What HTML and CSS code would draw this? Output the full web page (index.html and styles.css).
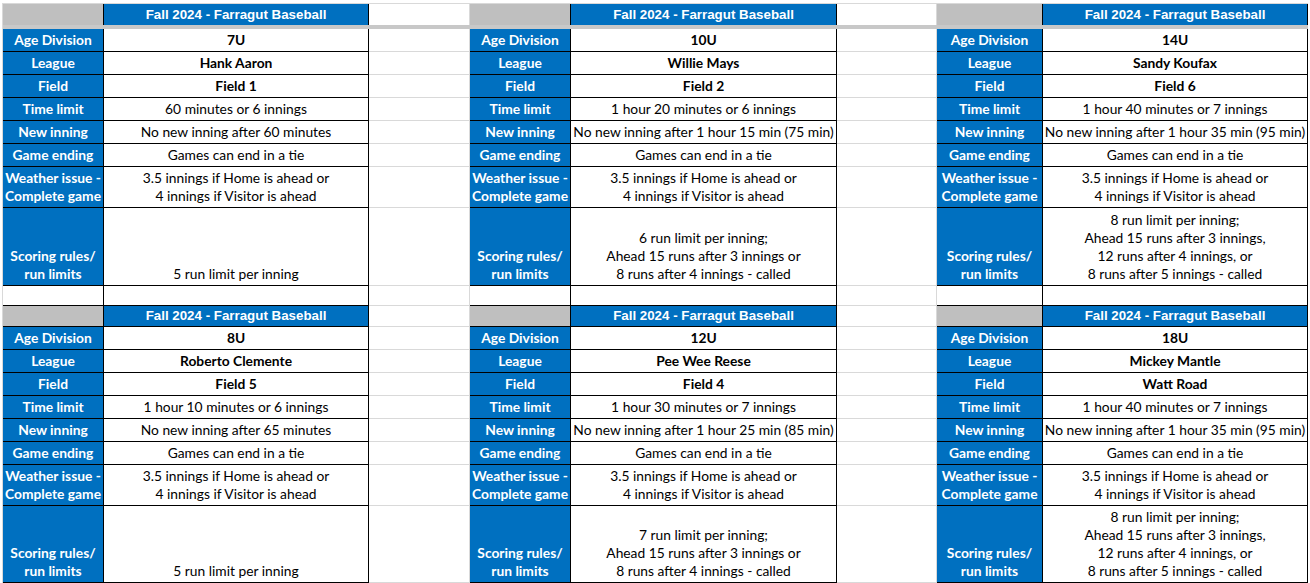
FILE: index.html
```html
<!DOCTYPE html>
<html lang="en">
<head>
<meta charset="utf-8">
<title>Fall 2024 - Farragut Baseball</title>
<link rel="stylesheet" href="styles.css">
</head>
<body>
<div class="sheet">
  <div class="row r-title">
    <div class="c hgray"></div><div class="c htitle">Fall 2024 - Farragut Baseball</div><div class="c gap"></div>
    <div class="c hgray"></div><div class="c htitle">Fall 2024 - Farragut Baseball</div><div class="c gap"></div>
    <div class="c hgray"></div><div class="c htitle">Fall 2024 - Farragut Baseball</div>
  </div>
  <div class="band"></div>
  <div class="row r-std">
    <div class="c lbl">Age Division</div><div class="c val b">7U</div><div class="c gap"></div>
    <div class="c lbl">Age Division</div><div class="c val b">10U</div><div class="c gap"></div>
    <div class="c lbl">Age Division</div><div class="c val b">14U</div>
  </div>
  <div class="row r-std">
    <div class="c lbl">League</div><div class="c val b">Hank Aaron</div><div class="c gap"></div>
    <div class="c lbl">League</div><div class="c val b">Willie Mays</div><div class="c gap"></div>
    <div class="c lbl">League</div><div class="c val b">Sandy Koufax</div>
  </div>
  <div class="row r-std">
    <div class="c lbl">Field</div><div class="c val b">Field 1</div><div class="c gap"></div>
    <div class="c lbl">Field</div><div class="c val b">Field 2</div><div class="c gap"></div>
    <div class="c lbl">Field</div><div class="c val b">Field 6</div>
  </div>
  <div class="row r-std">
    <div class="c lbl">Time limit</div><div class="c val">60 minutes or 6 innings</div><div class="c gap"></div>
    <div class="c lbl">Time limit</div><div class="c val">1 hour 20 minutes or 6 innings</div><div class="c gap"></div>
    <div class="c lbl">Time limit</div><div class="c val">1 hour 40 minutes or 7 innings</div>
  </div>
  <div class="row r-std">
    <div class="c lbl">New inning</div><div class="c val">No new inning after 60 minutes</div><div class="c gap"></div>
    <div class="c lbl">New inning</div><div class="c val">No new inning after 1 hour 15 min (75 min)</div><div class="c gap"></div>
    <div class="c lbl">New inning</div><div class="c val">No new inning after 1 hour 35 min (95 min)</div>
  </div>
  <div class="row r-std">
    <div class="c lbl">Game ending</div><div class="c val">Games can end in a tie</div><div class="c gap"></div>
    <div class="c lbl">Game ending</div><div class="c val">Games can end in a tie</div><div class="c gap"></div>
    <div class="c lbl">Game ending</div><div class="c val">Games can end in a tie</div>
  </div>
  <div class="row r-weather">
    <div class="c lbl"><span>Weather issue -<br>Complete game</span></div><div class="c val"><span>3.5 innings if Home is ahead or<br>4 innings if Visitor is ahead</span></div><div class="c gap"></div>
    <div class="c lbl"><span>Weather issue -<br>Complete game</span></div><div class="c val"><span>3.5 innings if Home is ahead or<br>4 innings if Visitor is ahead</span></div><div class="c gap"></div>
    <div class="c lbl"><span>Weather issue -<br>Complete game</span></div><div class="c val"><span>3.5 innings if Home is ahead or<br>4 innings if Visitor is ahead</span></div>
  </div>
  <div class="row r-score1">
    <div class="c lbl"><span>Scoring rules/<br>run limits</span></div><div class="c val">5 run limit per inning</div><div class="c gap"></div>
    <div class="c lbl"><span>Scoring rules/<br>run limits</span></div><div class="c val"><span>6 run limit per inning;<br>Ahead 15 runs after 3 innings or<br>8 runs after 4 innings - called</span></div><div class="c gap"></div>
    <div class="c lbl"><span>Scoring rules/<br>run limits</span></div><div class="c val"><span>8 run limit per inning;<br>Ahead 15 runs after 3 innings,<br>12 runs after 4 innings, or<br>8 runs after 5 innings - called</span></div>
  </div>
  <div class="row r-blank">
    <div class="c val"></div><div class="c val"></div><div class="c gap"></div>
    <div class="c val"></div><div class="c val"></div><div class="c gap"></div>
    <div class="c val"></div><div class="c val"></div>
  </div>
  <div class="row r-title2">
    <div class="c hgray"></div><div class="c htitle">Fall 2024 - Farragut Baseball</div><div class="c gap"></div>
    <div class="c hgray"></div><div class="c htitle">Fall 2024 - Farragut Baseball</div><div class="c gap"></div>
    <div class="c hgray"></div><div class="c htitle">Fall 2024 - Farragut Baseball</div>
  </div>
  <div class="row r-std">
    <div class="c lbl">Age Division</div><div class="c val b">8U</div><div class="c gap"></div>
    <div class="c lbl">Age Division</div><div class="c val b">12U</div><div class="c gap"></div>
    <div class="c lbl">Age Division</div><div class="c val b">18U</div>
  </div>
  <div class="row r-std">
    <div class="c lbl">League</div><div class="c val b">Roberto Clemente</div><div class="c gap"></div>
    <div class="c lbl">League</div><div class="c val b">Pee Wee Reese</div><div class="c gap"></div>
    <div class="c lbl">League</div><div class="c val b">Mickey Mantle</div>
  </div>
  <div class="row r-std">
    <div class="c lbl">Field</div><div class="c val b">Field 5</div><div class="c gap"></div>
    <div class="c lbl">Field</div><div class="c val b">Field 4</div><div class="c gap"></div>
    <div class="c lbl">Field</div><div class="c val b">Watt Road</div>
  </div>
  <div class="row r-std">
    <div class="c lbl">Time limit</div><div class="c val">1 hour 10 minutes or 6 innings</div><div class="c gap"></div>
    <div class="c lbl">Time limit</div><div class="c val">1 hour 30 minutes or 7 innings</div><div class="c gap"></div>
    <div class="c lbl">Time limit</div><div class="c val">1 hour 40 minutes or 7 innings</div>
  </div>
  <div class="row r-std">
    <div class="c lbl">New inning</div><div class="c val">No new inning after 65 minutes</div><div class="c gap"></div>
    <div class="c lbl">New inning</div><div class="c val">No new inning after 1 hour 25 min (85 min)</div><div class="c gap"></div>
    <div class="c lbl">New inning</div><div class="c val">No new inning after 1 hour 35 min (95 min)</div>
  </div>
  <div class="row r-std">
    <div class="c lbl">Game ending</div><div class="c val">Games can end in a tie</div><div class="c gap"></div>
    <div class="c lbl">Game ending</div><div class="c val">Games can end in a tie</div><div class="c gap"></div>
    <div class="c lbl">Game ending</div><div class="c val">Games can end in a tie</div>
  </div>
  <div class="row r-weather">
    <div class="c lbl"><span>Weather issue -<br>Complete game</span></div><div class="c val"><span>3.5 innings if Home is ahead or<br>4 innings if Visitor is ahead</span></div><div class="c gap"></div>
    <div class="c lbl"><span>Weather issue -<br>Complete game</span></div><div class="c val"><span>3.5 innings if Home is ahead or<br>4 innings if Visitor is ahead</span></div><div class="c gap"></div>
    <div class="c lbl"><span>Weather issue -<br>Complete game</span></div><div class="c val"><span>3.5 innings if Home is ahead or<br>4 innings if Visitor is ahead</span></div>
  </div>
  <div class="row r-score2">
    <div class="c lbl"><span>Scoring rules/<br>run limits</span></div><div class="c val">5 run limit per inning</div><div class="c gap"></div>
    <div class="c lbl"><span>Scoring rules/<br>run limits</span></div><div class="c val"><span>7 run limit per inning;<br>Ahead 15 runs after 3 innings or<br>8 runs after 4 innings - called</span></div><div class="c gap"></div>
    <div class="c lbl"><span>Scoring rules/<br>run limits</span></div><div class="c val"><span>8 run limit per inning;<br>Ahead 15 runs after 3 innings,<br>12 runs after 4 innings, or<br>8 runs after 5 innings - called</span></div>
  </div>
</div>
</body>
</html>
```
FILE: styles.css
```css
* { box-sizing: border-box; }

body {
  margin: 0;
  background: #ffffff;
  font-family: Lato, "Liberation Sans", sans-serif;
  color: #000000;
}

.sheet {
  margin: 3px 0 0 2px;
  width: 1306px;
  border-top: 1px solid #d9d9d9;
  border-left: 1px solid #d9d9d9;
}

.row {
  display: grid;
  grid-template-columns: 101px 265px 101px 101px 266px 100px 106px 265px;
}

.r-title { height: 21px; }
.r-std { height: 23px; }
.r-weather { height: 41px; }
.r-score1 { height: 78px; }
.r-blank { height: 20px; }
.r-title2 { height: 21px; }
.r-score2 { height: 77px; }

.band {
  height: 4px;
  background: #c8c8c8;
}

.c {
  display: flex;
  align-items: flex-end;
  justify-content: center;
  text-align: center;
  border-right: 1px solid #000000;
  border-bottom: 1px solid #000000;
  padding-bottom: 2px;
  font-size: 13.8px;
  line-height: 18px;
  white-space: nowrap;
}

.lbl {
  background: #0070c0;
  color: #ffffff;
  font-weight: 700;
}

.val { background: #ffffff; color: #000000; }
.b { font-weight: 700; }

.gap {
  border-right-color: #d9d9d9;
  border-bottom-color: #d9d9d9;
}

.hgray { background: #bfbfbf; }

.htitle {
  background: #0070c0;
  color: #ffffff;
  font-family: "Liberation Sans", Arial, sans-serif;
  font-weight: 700;
  font-size: 13.33px;
  align-items: center;
  padding-bottom: 0;
}

.r-title .c { border-bottom: 0; }
```
